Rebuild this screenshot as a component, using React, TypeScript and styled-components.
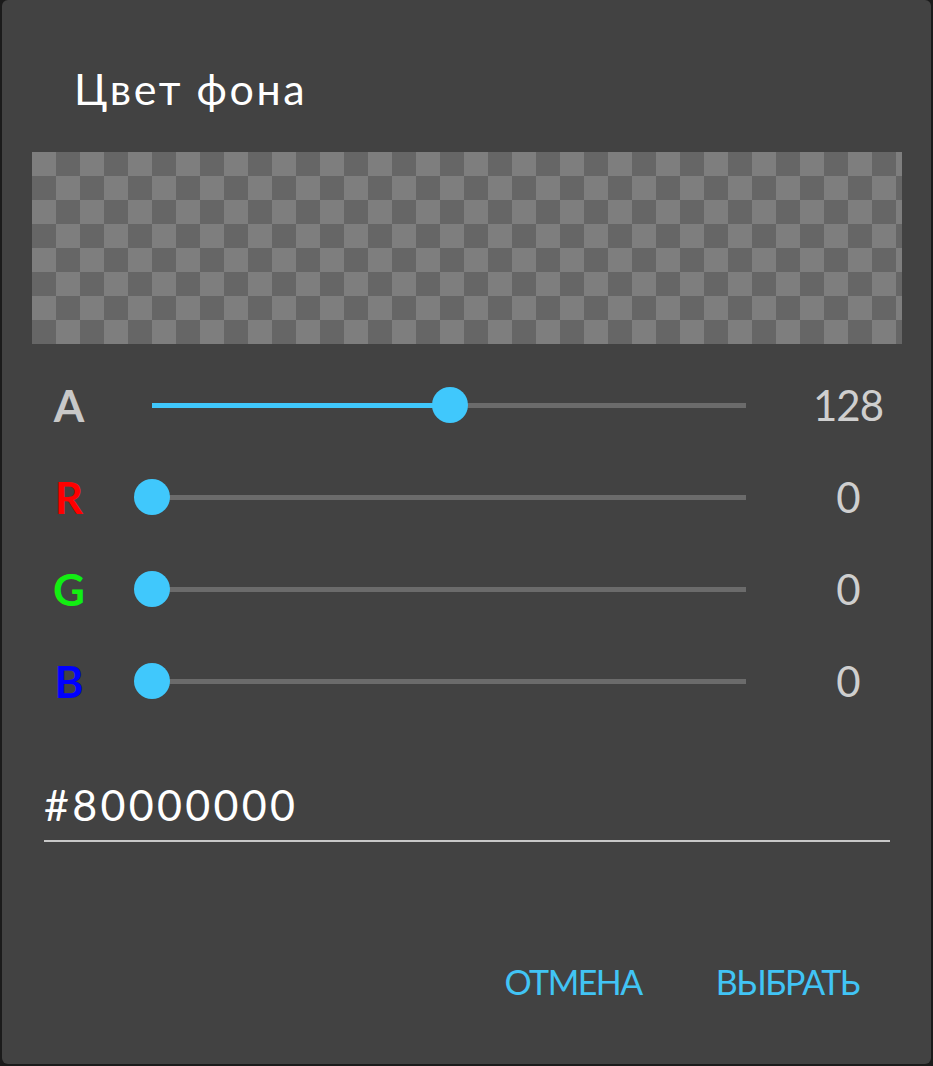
import React from "react";
import styled, { createGlobalStyle } from "styled-components";

const GlobalStyle = createGlobalStyle`
  html, body {
    margin: 0;
    padding: 0;
    background: #1b1b1b;
  }
  body {
    font-family: Lato, "Noto Sans", sans-serif;
  }
`;

const Page = styled.div`
  width: 933px;
  height: 1066px;
  padding-left: 2px;
  box-sizing: border-box;
`;

const Dialog = styled.div`
  width: 929px;
  height: 1064px;
  background: #424242;
  border-radius: 6px;
  display: flex;
  flex-direction: column;
  padding-top: 63px;
  box-sizing: border-box;
`;

const Title = styled.h1`
  margin: 0;
  padding-left: 72px;
  font-family: Lato, "Noto Sans", sans-serif;
  font-weight: 400;
  font-size: 43px;
  line-height: 52px;
  letter-spacing: 2.6px;
  color: #ffffff;
`;

const Preview = styled.div`
  margin: 37px 0 0 30px;
  width: 870px;
  height: 192px;
  background-color: #666666;
  background-image: conic-gradient(
    #666666 0 25%,
    #7e7e7e 0 50%,
    #666666 0 75%,
    #7e7e7e 0
  );
  background-size: 48px 48px;
`;

const Sliders = styled.div`
  margin-top: 15px;
  display: flex;
  flex-direction: column;
`;

const Row = styled.div`
  height: 92px;
  display: grid;
  grid-template-columns: 74px 594px 1fr;
  column-gap: 46px;
  align-items: center;
  padding-left: 30px;
`;

const Label = styled.div<{ $color: string }>`
  text-align: center;
  font-family: Lato, "Noto Sans", sans-serif;
  font-weight: 700;
  font-size: 44px;
  line-height: 92px;
  color: ${(p) => p.$color};
`;

const Track = styled.div`
  position: relative;
  height: 36px;
`;

const Rail = styled.div`
  position: absolute;
  left: 0;
  right: 0;
  top: 15.5px;
  height: 5px;
  background: #6b6b6b;
`;

const Fill = styled.div`
  position: absolute;
  left: 0;
  top: 15.5px;
  height: 5px;
  background: #40c8fc;
`;

const Thumb = styled.div`
  position: absolute;
  top: 0;
  width: 36px;
  height: 36px;
  margin-left: -18px;
  border-radius: 50%;
  background: #40c8fc;
`;

const Value = styled.div`
  padding-right: 27px;
  text-align: center;
  font-family: Lato, "Noto Sans", sans-serif;
  font-size: 42px;
  line-height: 92px;
  letter-spacing: -1px;
  color: #cfcfcf;
`;

const HexField = styled.div`
  margin: 52px 0 0 42px;
  width: 846px;
  padding-bottom: 9px;
  border-bottom: 2px solid #c8c8c8;
  font-family: Lato, "Noto Sans", sans-serif;
  font-size: 43px;
  line-height: 52px;
  letter-spacing: 3.3px;
  color: #ffffff;
`;

const Actions = styled.div`
  margin-top: 120px;
  display: flex;
  justify-content: flex-end;
  gap: 74px;
  padding-right: 72px;
`;

const ActionButton = styled.button`
  border: none;
  background: none;
  padding: 0;
  font-family: Lato, "Noto Sans", sans-serif;
  font-size: 34px;
  line-height: 40px;
  letter-spacing: -1.5px;
  color: #41c4f5;
  text-transform: uppercase;
  cursor: pointer;
`;

type Channel = { key: string; color: string; value: number };

const channels: Channel[] = [
  { key: "A", color: "#c8c8c8", value: 128 },
  { key: "R", color: "#ff0000", value: 0 },
  { key: "G", color: "#12ee12", value: 0 },
  { key: "B", color: "#0000ff", value: 0 },
];

const SliderRow: React.FC<{ ch: Channel }> = ({ ch }) => {
  const pct = (ch.value / 255) * 100;
  return (
    <Row>
      <Label $color={ch.color}>{ch.key}</Label>
      <Track>
        <Rail />
        <Fill style={{ width: `${pct}%` }} />
        <Thumb style={{ left: `${pct}%` }} />
      </Track>
      <Value>{ch.value}</Value>
    </Row>
  );
};

export default function App() {
  return (
    <>
      <GlobalStyle />
      <Page>
        <Dialog>
          <Title>Цвет фона</Title>
          <Preview />
          <Sliders>
            {channels.map((ch) => (
              <SliderRow key={ch.key} ch={ch} />
            ))}
          </Sliders>
          <HexField>#80000000</HexField>
          <Actions>
            <ActionButton>Отмена</ActionButton>
            <ActionButton>Выбрать</ActionButton>
          </Actions>
        </Dialog>
      </Page>
    </>
  );
}
